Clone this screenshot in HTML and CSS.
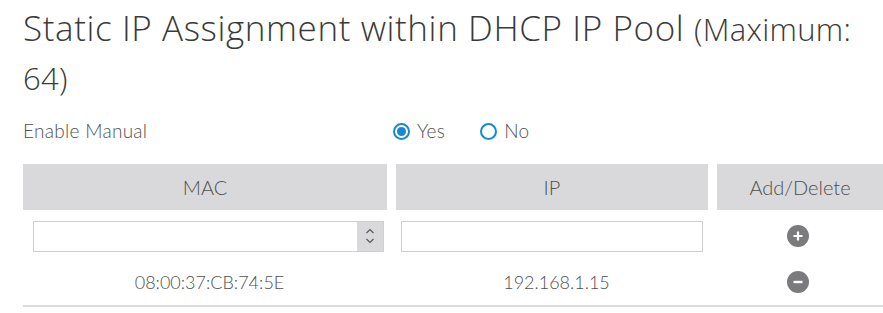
FILE: index.html
```html
<!DOCTYPE html>
<html lang="en">
<head>
    <meta charset="UTF-8">
    <meta name="viewport" content="width=device-width, initial-scale=1.0">
    <title>Static IP Assignment</title>
    <link rel="stylesheet" href="styles.css">
</head>
<body>

<div id="staticip">
    <h2 class="title">Static IP Assignment within DHCP IP Pool <span class="title-note">(Maximum:</span> <span class="title-note">64)</span></h2>

    <div class="option">
        <span class="option-label">Enable Manual</span>
        <label class="radio"><span class="radio-dot checked"></span>Yes</label>
        <label class="radio"><span class="radio-dot"></span>No</label>
    </div>

    <div class="grid">
        <div class="head">MAC</div>
        <div class="head">IP</div>
        <div class="head">Add/Delete</div>

        <div class="cell">
            <div class="select-box">
                <span class="spinner">
                    <svg width="10" height="18" viewBox="0 0 10 18"><path d="M1.5 6 L5 2.5 L8.5 6 M1.5 12 L5 15.5 L8.5 12" fill="none" stroke="#555" stroke-width="1.1"/></svg>
                </span>
            </div>
        </div>
        <div class="cell"><input type="text" class="ip-input"></div>
        <div class="cell">
            <span class="round-btn">
                <svg width="22" height="22" viewBox="0 0 22 22"><circle cx="11" cy="11" r="11" fill="#7b7b7d"/><path d="M11 6.5 V15.5 M6.5 11 H15.5" stroke="#fff" stroke-width="2.2"/></svg>
            </span>
        </div>

        <div class="cell last">08:00:37:CB:74:5E</div>
        <div class="cell last">192.168.1.15</div>
        <div class="cell last">
            <span class="round-btn">
                <svg width="22" height="22" viewBox="0 0 22 22"><circle cx="11" cy="11" r="11" fill="#7b7b7d"/><path d="M6.5 11 H15.5" stroke="#fff" stroke-width="2.4"/></svg>
            </span>
        </div>
    </div>
</div>

</body>
</html>
```

FILE: styles.css
```css
body {
    margin: 0;
    font-family: Lato, "Open Sans", sans-serif;
    font-weight: 300;
    color: #505050;
    background: #fff;
}
#staticip {
    padding-left: 23px;
}
.title {
    margin: 4px 0 0 0;
    font-family: "Open Sans", sans-serif;
    font-weight: 300;
    font-size: 35px;
    letter-spacing: 0.6px;
    line-height: 48px;
    color: #3a3a3a;
}
.title-note {
    font-size: 31px;
    letter-spacing: 0.3px;
}
.option {
    display: flex;
    align-items: center;
    height: 36px;
    margin-top: 10px;
    font-size: 19px;
    letter-spacing: 0.3px;
}
.option-label {
    width: 370px;
}
.radio {
    display: flex;
    align-items: center;
    margin-right: 35px;
}
.radio-dot {
    width: 17px;
    height: 17px;
    box-sizing: border-box;
    border: 2px solid #1689d4;
    border-radius: 50%;
    margin-right: 7px;
    margin-top: 3px;
    position: relative;
}
.radio-dot.checked::after {
    content: "";
    position: absolute;
    left: 2px;
    top: 2px;
    width: 9px;
    height: 9px;
    border-radius: 50%;
    background: #1689d4;
}
.grid {
    display: grid;
    grid-template-columns: 364px 312px 1fr;
    column-gap: 9px;
    margin-top: 16px;
}
.head {
    height: 46px;
    line-height: 46px;
    background: #d9d9db;
    text-align: center;
    font-size: 20px;
}
.cell {
    display: flex;
    align-items: center;
    justify-content: center;
    height: 46px;
    font-size: 18px;
}
.cell:nth-child(4), .cell:nth-child(5), .cell:nth-child(6) {
    margin-top: 3px;
}
.cell.last {
    border-bottom: 2px solid #dcdcdc;
}
.grid .cell.last:nth-child(7), .grid .cell.last:nth-child(8) {
    margin-right: -9px;
}
.select-box {
    width: 351px;
    height: 31px;
    margin-left: 10px;
    margin-right: 3px;
    box-sizing: border-box;
    border: 1px solid #cfcfcf;
    display: flex;
    justify-content: flex-end;
}
.spinner {
    width: 26px;
    background: #d9d9db;
    display: flex;
    align-items: center;
    justify-content: center;
}
.ip-input {
    width: 302px;
    height: 31px;
    box-sizing: border-box;
    border: 1px solid #cfcfcf;
    margin: 0;
    padding: 0;
}
.round-btn {
    display: flex;
    margin-left: -4px;
}
```
